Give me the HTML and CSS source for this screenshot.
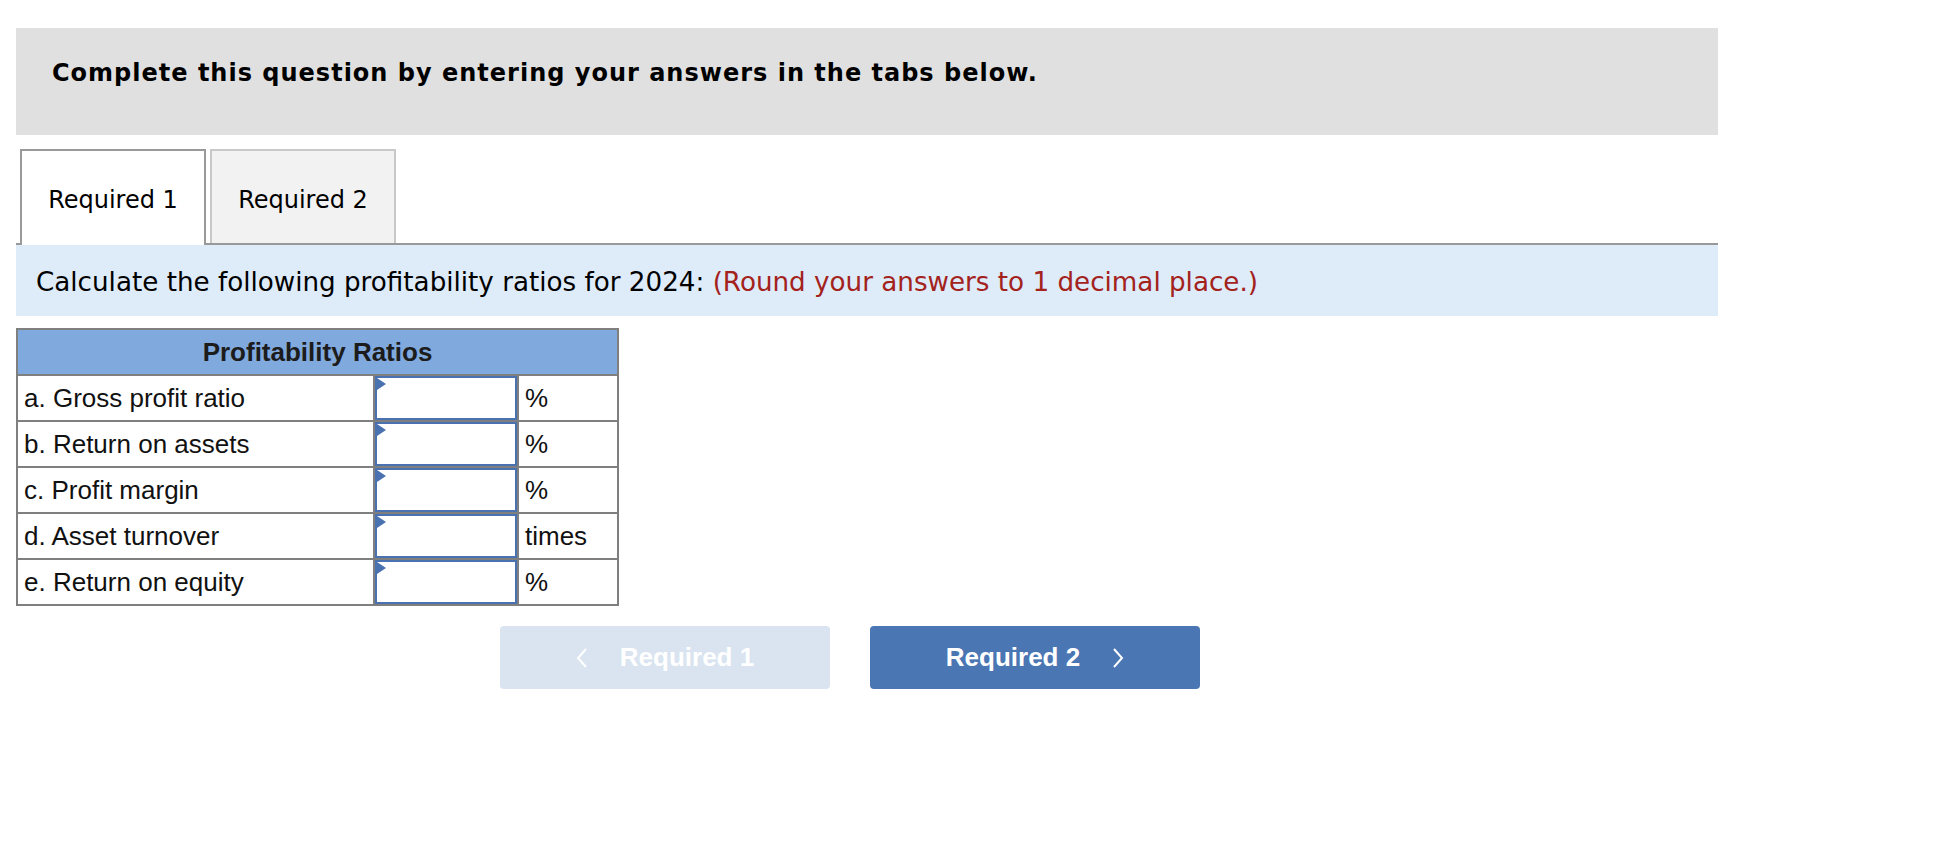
FILE: index.html
```html
<!DOCTYPE html>
<html lang="en">
<head>
<meta charset="utf-8">
<title>Profitability Ratios</title>
<link rel="stylesheet" href="styles.css">
</head>
<body>
<div class="page">
  <div class="banner">
    <p class="banner-text">Complete this question by entering your answers in the tabs below.</p>
  </div>

  <div class="tabs">
    <div class="tab tab-active">Required 1</div>
    <div class="tab">Required 2</div>
  </div>

  <div class="instr">
    <p class="instr-text">Calculate the following profitability ratios for 2024: <span class="instr-red">(Round your answers to 1 decimal place.)</span></p>
  </div>

  <table class="ratios">
    <colgroup>
      <col class="col-label">
      <col class="col-input">
      <col class="col-unit">
    </colgroup>
    <thead>
      <tr><th colspan="3" class="ratios-head">Profitability Ratios</th></tr>
    </thead>
    <tbody>
      <tr><td class="lbl">a. Gross profit ratio</td><td class="cell-in"><div class="inp"></div></td><td class="unit">%</td></tr>
      <tr><td class="lbl">b. Return on assets</td><td class="cell-in"><div class="inp"></div></td><td class="unit">%</td></tr>
      <tr><td class="lbl">c. Profit margin</td><td class="cell-in"><div class="inp"></div></td><td class="unit">%</td></tr>
      <tr><td class="lbl">d. Asset turnover</td><td class="cell-in"><div class="inp"></div></td><td class="unit">times</td></tr>
      <tr><td class="lbl">e. Return on equity</td><td class="cell-in"><div class="inp"></div></td><td class="unit">%</td></tr>
    </tbody>
  </table>

  <div class="nav">
    <button class="btn btn-prev" type="button">
      <svg class="chev" width="12" height="20" viewBox="0 0 12 20"><polyline points="10,1 2,10 10,19" fill="none" stroke="#ffffff" stroke-width="2"/></svg>
      <span>Required 1</span>
    </button>
    <button class="btn btn-next" type="button">
      <span>Required 2</span>
      <svg class="chev" width="12" height="20" viewBox="0 0 12 20"><polyline points="2,1 10,10 2,19" fill="none" stroke="#ffffff" stroke-width="2"/></svg>
    </button>
  </div>
</div>
</body>
</html>
```

FILE: styles.css
```css
* { box-sizing: border-box; }

body {
  margin: 0;
  background: #ffffff;
  font-family: "DejaVu Sans", Verdana, sans-serif;
  color: #000000;
}

.page {
  padding: 28px 0 0 16px;
  width: 1718px;
}

.banner {
  height: 107px;
  background: #e0e0e0;
  padding: 31px 0 0 36px;
}

.banner-text {
  margin: 0;
  font-weight: bold;
  font-size: 24px;
  letter-spacing: 1px;
  line-height: 29px;
}

.tabs {
  display: flex;
  gap: 4px;
  margin-top: 14px;
  padding-left: 4px;
  border-bottom: 2px solid #999999;
  height: 96px;
}

.tab {
  width: 186px;
  height: 94px;
  border: 2px solid #c8c8c8;
  border-bottom: none;
  background: #f2f2f2;
  font-size: 24px;
  line-height: 28px;
  padding-top: 35px;
  text-align: center;
  color: #000000;
}

.tab-active {
  height: 96px;
  border-color: #999999;
  background: #ffffff;
  position: relative;
  z-index: 1;
}

.instr {
  height: 71px;
  background: #deebf8;
  display: flex;
  align-items: center;
  padding-left: 20px;
  padding-top: 2px;
}

.instr-text {
  margin: 0;
  font-size: 26.2px;
  line-height: 30px;
}

.instr-red {
  color: #a3221c;
}

.ratios {
  margin-top: 12px;
  border-collapse: collapse;
  width: 601px;
  table-layout: fixed;
  font-family: "Liberation Sans", Arial, sans-serif;
  font-size: 26px;
}

.col-label { width: 357px; }
.col-input { width: 144px; }
.col-unit { width: 100px; }

.ratios th,
.ratios td {
  border: 2px solid #7f7f7f;
  height: 46px;
  padding: 0;
}

.ratios-head {
  background: #80a9de;
  font-weight: bold;
  color: #1c1c1c;
  text-align: center;
}

.lbl {
  padding-left: 6px !important;
  color: #111111;
}

.unit {
  padding-left: 6px !important;
  color: #111111;
}

.cell-in {
  vertical-align: top;
}

.inp {
  position: relative;
  height: 44px;
  width: 100%;
  border: 2px solid #4a72b0;
  background: #ffffff;
}

.inp::before {
  content: "";
  position: absolute;
  left: 0;
  top: 0;
  border-left: 9px solid #4a72b0;
  border-top: 6px solid transparent;
  border-bottom: 6px solid transparent;
}

.nav {
  display: flex;
  gap: 40px;
  margin-top: 20px;
  padding-left: 484px;
}

.btn {
  width: 330px;
  height: 63px;
  border: none;
  border-radius: 4px;
  display: flex;
  align-items: center;
  justify-content: center;
  gap: 32px;
  font-family: "Liberation Sans", Arial, sans-serif;
  font-weight: bold;
  font-size: 26px;
  color: #ffffff;
  padding: 0;
}

.btn-prev {
  background: #d9e4f0;
}

.btn-next {
  background: #4a76b4;
}

.chev {
  display: block;
}
```
